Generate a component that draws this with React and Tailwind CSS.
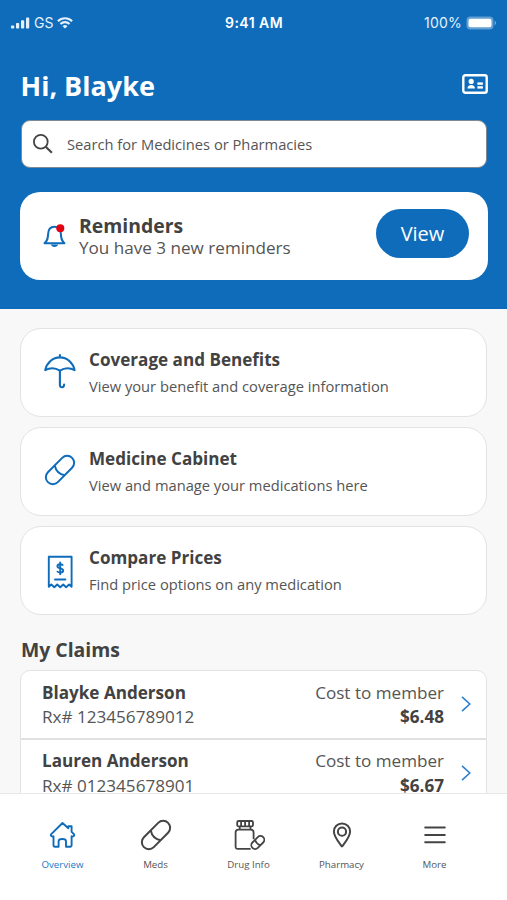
const BRAND = "#0f6cbb";

function SignalIcon() {
  return (
    <svg className="h-3 w-[19px]" viewBox="0 0 19 12" fill="currentColor">
      <rect x="0" y="8.5" width="3.2" height="3" rx="0.8" />
      <rect x="5" y="6" width="3.2" height="5.5" rx="0.8" />
      <rect x="10" y="3.3" width="3.2" height="8.2" rx="0.8" />
      <rect x="15" y="0.4" width="3.2" height="11.1" rx="0.8" />
    </svg>
  );
}

function WifiIcon() {
  return (
    <svg className="h-3 w-4" viewBox="0 0 16 12" fill="none" stroke="currentColor" strokeWidth="2.1">
      <path d="M0.9 4.2a10.2 10.2 0 0 1 14.2 0" />
      <path d="M3.5 7a6.4 6.4 0 0 1 9 0" />
      <path d="M8 11.6 5.6 9.2a3.5 3.5 0 0 1 4.8 0z" fill="currentColor" stroke="none" />
    </svg>
  );
}

function BatteryIcon() {
  return (
    <svg className="h-[14px] w-[31px]" viewBox="0 0 31 14">
      <rect x="0.5" y="0.5" width="27" height="13" rx="4" fill="#fff" fillOpacity="0.35" />
      <rect x="2.5" y="2.7" width="23" height="8.6" rx="2" fill="#fff" />
      <path d="M28.6 4.8v4.4c2-.7 2-3.7 0-4.4z" fill="#fff" fillOpacity="0.4" />
    </svg>
  );
}

function IdCardIcon() {
  return (
    <svg className="h-5 w-[26px]" viewBox="0 0 26 20" fill="#fff">
      <rect x="1.3" y="1.2" width="23.4" height="17.6" rx="2" fill="none" stroke="#fff" strokeWidth="2.4" />
      <circle cx="9.2" cy="7.4" r="2.6" />
      <path d="M5.4 14.6c0-2.6 1.6-3.7 3.8-3.7s3.8 1.1 3.8 3.7z" />
      <rect x="15.4" y="8.4" width="5.5" height="2.4" />
      <rect x="15.4" y="12.2" width="5.5" height="2.4" />
    </svg>
  );
}

function SearchIcon() {
  return (
    <svg className="h-5 w-5" viewBox="0 0 20 20" fill="none" stroke="#444" strokeWidth="1.8">
      <circle cx="7.8" cy="7.8" r="6.9" />
      <path d="m12.7 12.7 6.2 6" strokeWidth="2.1" />
    </svg>
  );
}

function BellIcon() {
  return (
    <svg className="h-6 w-6" viewBox="0 0 24 24" fill="none" stroke={BRAND} strokeWidth="2">
      <path d="M1.5 19.2c3-2.4 3.4-4.4 3.6-9.2C5.3 5.5 7.800 2.800 11.500 2.800s6.200 2.700 6.400 7.200c.2 4.800.6 6.800 3.600 9.200z" strokeLinejoin="round" />
      <path d="M7.900 20.600c.4 3.100 6.800 3.100 7.200 0z" fill={BRAND} stroke="none" />
      <circle cx="17.300" cy="4.200" r="4" fill="#e3000f" stroke="none" />
    </svg>
  );
}

function UmbrellaIcon() {
  return (
    <svg className="h-9 w-8" viewBox="0 0 32 36" fill="none" stroke={BRAND} strokeWidth="2.1" strokeLinecap="round" strokeLinejoin="round">
      <path d="M15.900 2v2.300M1.200 17.100C2.800 9.600 8.700 4.400 15.900 4.400s13.100 5.200 14.700 12.700c-4.400-2.200-10.400-2.200-14.700.6-4.300-2.800-10.300-2.800-14.700-.6z" />
      <path d="M15.900 17.700v14.300c0 3.200 4.200 3 4.200-.4" />
    </svg>
  );
}

function PillIcon({ color }) {
  return (
    <svg className="h-8 w-8" viewBox="0 0 32 32" fill="none" stroke={color} strokeWidth="2">
      <g transform="rotate(-45 16 16)">
        <rect x="-1.1" y="9" width="34.2" height="14" rx="7" />
        <path d="M15.6 9c-3 4.400-3 9.600 0 14" />
      </g>
    </svg>
  );
}

function ReceiptIcon() {
  return (
    <svg className="mt-[5px] h-[34px] w-[26px]" viewBox="0 0 26 34" fill="none" stroke={BRAND} strokeWidth="1.9" strokeLinejoin="round">
      <path d="M1.800 31.800V1.800h22.800v30l-2.500-2.300-3 2.800-2.900-2.800-3 2.800-3-2.800-2.900 2.800-3-2.800z" />
      <path d="M8 24.500h10.400" strokeLinecap="round" />
      <path d="M16 10.600c-.6-1.700-5.600-2-5.600.6 0 2.700 5.800 1.600 5.800 4.300 0 2.700-5.400 2.500-6.100.5M13.200 6.800V20" />
    </svg>
  );
}

function HomeIcon() {
  return (
    <svg className="h-7 w-7" viewBox="0 0 28 28" fill="none" stroke={BRAND} strokeWidth="1.9" strokeLinejoin="round">
      <path d="M13.500 2 2 13.400c-.8 1.400.8 2.400 2.500 1.900v8.700c0 1.200.5 1.800 1.500 1.800h3.600v-5.600c0-1.500 1-2.200 3.700-2.200s3.700.7 3.700 2.200v5.600h4.100c1 0 1.500-.6 1.500-1.800v-8.700c1.700.5 3.300-.5 2.500-1.900l-2.500-2.600V5.200h-3.300v2z" />
    </svg>
  );
}

function BottleIcon() {
  return (
    <svg className="h-8 w-8" viewBox="0 0 32 32" fill="none" stroke="#444" strokeWidth="1.8" strokeLinejoin="round">
      <rect x="4.200" y="2" width="15.800" height="5.400" rx="1.500" />
      <path d="M8.100 2v5.400M12.100 2v5.400M16.100 2v5.400M6.700 7.400v3.200M17.500 7.400v3.200" />
      <path d="M17.600 29.800H4.800c-1.500 0-2.200-.7-2.200-2.200V13.400c0-1.800 1-2.800 2.800-2.800h12.400c1.800 0 2.800 1 2.800 2.800v6.800" />
      <g transform="rotate(-45 24.800 23.500)">
        <rect x="17.200" y="19.700" width="15.200" height="7.600" rx="3.800" />
        <path d="M24.600 19.700c-1 2.200-1 5.400 0 7.600" />
      </g>
    </svg>
  );
}

function PinIcon() {
  return (
    <svg className="h-[26px] w-5" viewBox="0 0 20 26" fill="none" stroke="#444" strokeWidth="2">
      <path d="M10 24.500C7 20.500 1.900 15 1.900 9.500a8.100 8.100 0 0 1 16.200 0c0 5.500-5.100 11-8.100 15z" strokeLinejoin="round" />
      <circle cx="10" cy="9.700" r="4.100" />
    </svg>
  );
}

function MenuIcon() {
  return (
    <svg className="h-[18px] w-[22px]" viewBox="0 0 22 18" stroke="#444" strokeWidth="2" strokeLinecap="round">
      <path d="M1.200 1.500h19.600M1.200 8.900h19.600M1.200 16.300h19.600" />
    </svg>
  );
}

function ChevronIcon() {
  return (
    <svg className="h-4 w-[10px]" viewBox="0 0 10 16" fill="none" stroke="#2f7fd0" strokeWidth="1.6">
      <path d="m1 .8 7.800 7.200L1 15.200" />
    </svg>
  );
}

const links = [
  { title: "Coverage and Benefits", text: "View your benefit and coverage information", icon: <UmbrellaIcon /> },
  { title: "Medicine Cabinet", text: "View and manage your medications here", icon: <PillIcon color={BRAND} /> },
  { title: "Compare Prices", text: "Find price options on any medication", icon: <ReceiptIcon /> },
];

const claims = [
  { name: "Blayke Anderson", rx: "123456789012", cost: "$6.48" },
  { name: "Lauren Anderson", rx: "012345678901", cost: "$6.67" },
];

const tabs = [
  { label: "Overview", icon: <HomeIcon />, active: true },
  { label: "Meds", icon: <PillIcon color="#444" /> },
  { label: "Drug Info", icon: <BottleIcon /> },
  { label: "Pharmacy", icon: <PinIcon /> },
  { label: "More", icon: <MenuIcon /> },
];

function StatusBar() {
  return (
    <div className="grid h-[46px] grid-cols-3 items-center pr-[10px] pl-[11px] font-['Inter',sans-serif] text-[14px] leading-5">
      <div className="flex items-center gap-1 text-[#e4f1fb]">
        <SignalIcon />
        <span>GS</span>
        <WifiIcon />
      </div>
      <div className="text-center font-semibold tracking-[0.45px]">9:41 AM</div>
      <div className="flex items-center justify-end gap-1 text-[#e4f1fb]">
        <span className="tracking-[0.2px]">100%</span>
        <BatteryIcon />
      </div>
    </div>
  );
}

function LinkCard({ icon, title, text }) {
  return (
    <div className="flex h-[89px] items-center rounded-[21px] border-[1.5px] border-[#e3e3e3] bg-white pl-[21.5px]">
      <div className="flex w-[34px] justify-center pb-[3px]">{icon}</div>
      <div className="ml-[12.5px]">
        <h3 className="pt-px text-[17.1px] leading-6 font-bold whitespace-nowrap">{title}</h3>
        <p className="mt-0.5 mb-px text-[14.7px] leading-6 whitespace-nowrap text-[#555]">{text}</p>
      </div>
    </div>
  );
}

function ClaimRow({ name, rx, cost }) {
  return (
    <div className="flex h-[68.5px] shrink-0 items-center border-b-2 border-[#e0e0e0] pr-[15px] pl-[21px] text-[17.1px] leading-[24.5px] whitespace-nowrap">
      <div className="pt-0.5">
        <div className="font-bold">{name}</div>
        <div className="text-[#555]">Rx# {rx}</div>
      </div>
      <div className="ml-auto pt-0.5 text-right">
        <div className="text-[#555]">Cost to member</div>
        <div className="font-bold">{cost}</div>
      </div>
      <div className="ml-[17px]">
        <ChevronIcon />
      </div>
    </div>
  );
}

export default function App() {
  return (
    <div className="flex h-[900px] w-[507px] flex-col overflow-hidden bg-[#f8f8f8] font-['Open_Sans',sans-serif] text-[#424242]">
      <header className="h-[309px] shrink-0 bg-[#0f6cbb] text-white">
        <StatusBar />
        <div className="flex h-[74px] items-center justify-between pt-0.5 pr-[19px] pl-[20.5px]">
          <h1 className="mt-1 text-[27px] leading-9 font-bold">Hi, Blayke</h1>
          <IdCardIcon />
        </div>
        <div className="mr-5 ml-[21px] flex h-12 items-center rounded-[9px] border border-[#7d8a93] bg-white pl-[11px] text-[#555]">
          <SearchIcon />
          <span className="ml-[14px] text-[14.7px]">Search for Medicines or Pharmacies</span>
        </div>
        <div className="mt-6 mr-[19px] ml-5 flex h-[88px] items-center rounded-[20px] bg-white pr-[19px] pl-[23px] text-[#424242]">
          <BellIcon />
          <div className="ml-3 pt-px">
            <h2 className="text-[19.4px] leading-[22px] font-bold">Reminders</h2>
            <p className="text-[17.1px] leading-[22px] text-[#555]">You have 3 new reminders</p>
          </div>
          <button className="mb-[5px] ml-auto h-[49px] w-[93px] rounded-full bg-[#0f6cbb] text-[20px] text-white">View</button>
        </div>
      </header>

      <main className="flex min-h-0 flex-1 flex-col overflow-hidden px-5 pt-[19px]">
        <div className="flex shrink-0 flex-col gap-[10px]">
          {links.map((link) => (
            <LinkCard key={link.title} {...link} />
          ))}
        </div>
        <h2 className="mt-5 ml-px text-[19.4px] leading-[30px] font-bold">My Claims</h2>
        <div className="mt-[5px] h-[200px] shrink-0 rounded-t-[10px] border-[1.5px] border-[#e3e3e3] bg-white">
          {claims.map((claim) => (
            <ClaimRow key={claim.rx} {...claim} />
          ))}
        </div>
      </main>

      <nav className="flex h-[107px] shrink-0 border-t border-[#e8e8e8] bg-white pr-[26px] pl-4">
        {tabs.map((tab) => (
          <div key={tab.label} className="flex flex-1 flex-col items-center pt-[25px]">
            <div className="flex h-8 items-center">{tab.icon}</div>
            <span className={tab.active ? "mt-1.5 text-[9.7px] leading-4 text-[#2179c9]" : "mt-1.5 text-[9.7px] leading-4 text-[#555]"}>
              {tab.label}
            </span>
          </div>
        ))}
      </nav>
    </div>
  );
}
